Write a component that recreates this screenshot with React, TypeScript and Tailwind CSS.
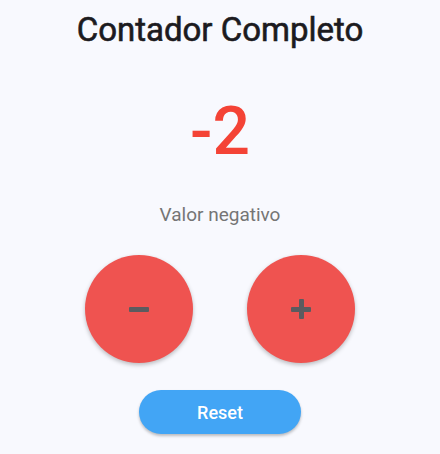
import React, { useState } from "react";

export default function App() {
  const [count, setCount] = useState(-2);
  const label = count < 0 ? "Valor negativo" : count > 0 ? "Valor positivo" : "Valor cero";

  return (
    <div
      className="w-[440px] h-[454px] bg-[#f8f9fe] flex flex-col items-center"
      style={{ fontFamily: "Roboto, sans-serif" }}
    >
      <h1 className="mt-[10px] text-[33px] leading-[40px] text-[#1c1b1f] [-webkit-text-stroke:0.6px_#1c1b1f]">
        Contador Completo
      </h1>
      <div className="mt-[42px] text-[66px] leading-[80px] font-medium text-[#f44336]">{count}</div>
      <p className="mt-[30px] text-[19px] leading-[26px] text-[#757575]">{label}</p>
      <div className="mt-[27px] flex gap-[54px]">
        <button
          onClick={() => setCount(count - 1)}
          className="w-[108px] h-[108px] rounded-full bg-[#ef5350] shadow-[0_2px_4px_rgba(0,0,0,0.25)] flex items-center justify-center"
        >
          <span className="block w-[20px] h-[5px] bg-[#5b5b5f] rounded-[1px]" />
        </button>
        <button
          onClick={() => setCount(count + 1)}
          className="w-[108px] h-[108px] rounded-full bg-[#ef5350] shadow-[0_2px_4px_rgba(0,0,0,0.25)] flex items-center justify-center"
        >
          <span className="relative block w-[20px] h-[20px]">
            <span className="absolute left-0 top-[7.5px] w-[20px] h-[5px] bg-[#5b5b5f] rounded-[1px]" />
            <span className="absolute top-0 left-[7.5px] w-[5px] h-[20px] bg-[#5b5b5f] rounded-[1px]" />
          </span>
        </button>
      </div>
      <button
        onClick={() => setCount(0)}
        className="mt-[27px] w-[162px] h-[44px] rounded-full bg-[#42a5f5] text-white text-[18px] font-medium shadow-[0_2px_3px_rgba(0,0,0,0.25)]"
      >
        Reset
      </button>
    </div>
  );
}
